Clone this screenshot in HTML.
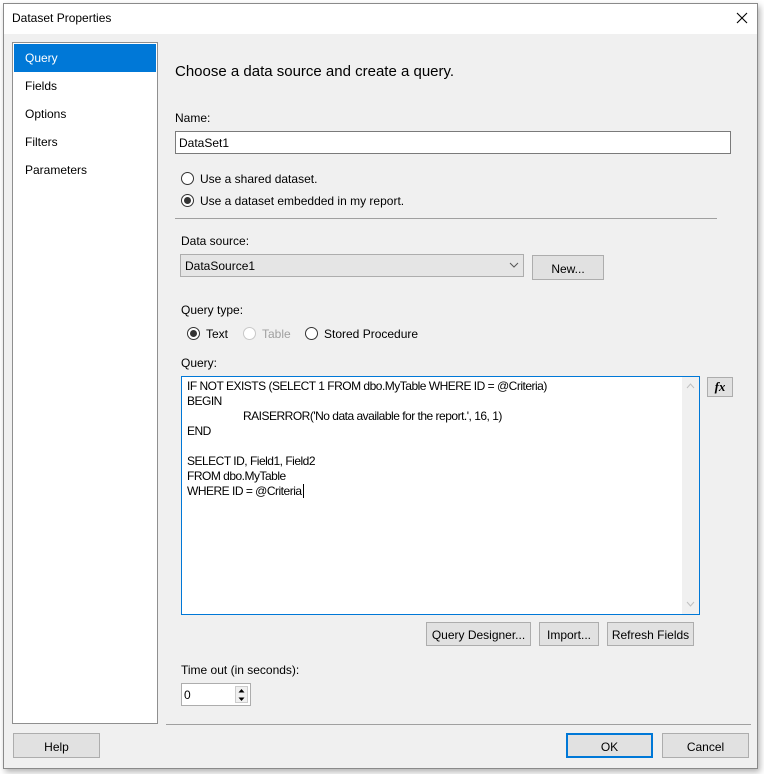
<!DOCTYPE html>
<html><head><meta charset="utf-8"><style>
*{box-sizing:border-box;margin:0;padding:0}
body{width:764px;height:774px;background:#fff;font-family:"Liberation Sans",sans-serif;font-size:12px;color:#000;position:relative;overflow:hidden}
.a{position:absolute}
.win{left:3px;top:3px;width:755px;height:766px;border:1px solid #8a8a8a;background:#f0f0f0;box-shadow:2px 3px 6px rgba(0,0,0,.3)}
.title{left:0;top:0;width:753px;height:30px;background:#fff}
.btn{position:absolute;background:#e1e1e1;border:1px solid #adadad;text-align:center;font-size:12px}
.radio{position:absolute;width:13px;height:13px;border:1px solid #333;border-radius:50%;background:#fff}
.radio.on::after{content:"";position:absolute;left:2px;top:2px;width:7px;height:7px;border-radius:50%;background:#333}
.radio.dis{border-color:#c8c8c8}
.q{position:absolute;left:187px;white-space:pre;font-size:12px;line-height:15px;letter-spacing:-0.5px}
</style></head><body>
<div class="a win">
 <div class="a title"></div>
</div>
<div class="a" style="left:12px;top:11px;font-size:12px">Dataset Properties</div>
<svg class="a" style="left:736px;top:12px" width="12" height="12"><path d="M1 1L11 11M11 1L1 11" stroke="#000" stroke-width="1.1"/></svg>

<div class="a" style="left:12px;top:42px;width:146px;height:682px;background:#fff;border:1px solid #8f8f8f"></div>
<div class="a" style="left:14px;top:44px;width:142px;height:28px;background:#0078d7"></div>
<div class="a" style="left:25px;top:51px;color:#fff">Query</div>
<div class="a" style="left:25px;top:79px">Fields</div>
<div class="a" style="left:25px;top:107px">Options</div>
<div class="a" style="left:25px;top:135px">Filters</div>
<div class="a" style="left:25px;top:163px">Parameters</div>

<div class="a" style="left:175px;top:63px;font-size:15px">Choose a data source and create a query.</div>
<div class="a" style="left:175px;top:111px">Name:</div>
<div class="a" style="left:175px;top:131px;width:556px;height:23px;background:#fff;border:1px solid #7a7a7a;padding:4px 3px">DataSet1</div>

<div class="radio" style="left:181px;top:172px"></div>
<div class="a" style="left:200px;top:172px">Use a shared dataset.</div>
<div class="radio on" style="left:181px;top:194px"></div>
<div class="a" style="left:200px;top:194px">Use a dataset embedded in my report.</div>
<div class="a" style="left:175px;top:218px;width:542px;height:1px;background:#a0a0a0"></div>

<div class="a" style="left:181px;top:234px">Data source:</div>
<div class="a" style="left:180px;top:254px;width:344px;height:23px;background:#e5e5e5;border:1px solid #adadad;padding:4px 4px">DataSource1</div>
<svg class="a" style="left:509px;top:262px" width="10" height="6"><path d="M1 1L5 5L9 1" stroke="#555" fill="none"/></svg>
<div class="btn" style="left:532px;top:255px;width:72px;height:25px;padding-top:6px">New...</div>

<div class="a" style="left:181px;top:303px">Query type:</div>
<div class="radio on" style="left:187px;top:327px"></div>
<div class="a" style="left:206px;top:327px">Text</div>
<div class="radio dis" style="left:243px;top:327px"></div>
<div class="a" style="left:262px;top:327px;color:#a0a0a0">Table</div>
<div class="radio" style="left:305px;top:327px"></div>
<div class="a" style="left:324px;top:327px">Stored Procedure</div>

<div class="a" style="left:181px;top:356px">Query:</div>
<div class="a" style="left:181px;top:376px;width:519px;height:239px;background:#fff;border:1px solid #0078d7"></div>
<div class="a" style="left:682px;top:377px;width:17px;height:237px;background:#f0f0f0"></div>
<svg class="a" style="left:686px;top:383px" width="9" height="6"><path d="M1 5L4.5 1L8 5" stroke="#c0c0c0" fill="none"/></svg>
<svg class="a" style="left:686px;top:601px" width="9" height="6"><path d="M1 1L4.5 5L8 1" stroke="#c0c0c0" fill="none"/></svg>
<div class="q" style="top:379px">IF NOT EXISTS (SELECT 1 FROM dbo.MyTable WHERE ID = @Criteria)</div>
<div class="q" style="top:394px">BEGIN</div>
<div class="q" style="top:409px;left:243px">RAISERROR('No data available for the report.', 16, 1)</div>
<div class="q" style="top:424px">END</div>
<div class="q" style="top:454px">SELECT ID, Field1, Field2</div>
<div class="q" style="top:469px">FROM dbo.MyTable</div>
<div class="q" style="top:484px">WHERE ID = @Criteria<span style="border-left:1px solid #000;margin-left:1px"></span></div>
<div class="btn" style="left:707px;top:377px;width:26px;height:20px;font-family:'Liberation Serif',serif;font-style:italic;font-weight:bold;font-size:13px;padding-top:1px">fx</div>

<div class="btn" style="left:426px;top:622px;width:105px;height:24px;padding-top:5px">Query Designer...</div>
<div class="btn" style="left:539px;top:622px;width:60px;height:24px;padding-top:5px">Import...</div>
<div class="btn" style="left:607px;top:622px;width:87px;height:24px;padding-top:5px">Refresh Fields</div>

<div class="a" style="left:181px;top:663px">Time out (in seconds):</div>
<div class="a" style="left:181px;top:683px;width:70px;height:23px;background:#fff;border:1px solid #adadad;padding:4px 2px">0</div>
<div class="a" style="left:235px;top:686px;width:13px;height:17px;background:#f0f0f0;border:1px solid #ccc"></div>
<svg class="a" style="left:238px;top:688px" width="7" height="14"><path d="M0.5 4.5L3.5 1L6.5 4.5Z M0.5 9.5L3.5 13L6.5 9.5Z" fill="#000"/></svg>

<div class="a" style="left:166px;top:724px;width:585px;height:1px;background:#a0a0a0"></div>
<div class="btn" style="left:13px;top:733px;width:87px;height:25px;padding-top:6px">Help</div>
<div class="btn" style="left:566px;top:733px;width:87px;height:25px;padding-top:5px;border:2px solid #0078d7">OK</div>
<div class="btn" style="left:662px;top:733px;width:87px;height:25px;padding-top:6px">Cancel</div>
</body></html>
